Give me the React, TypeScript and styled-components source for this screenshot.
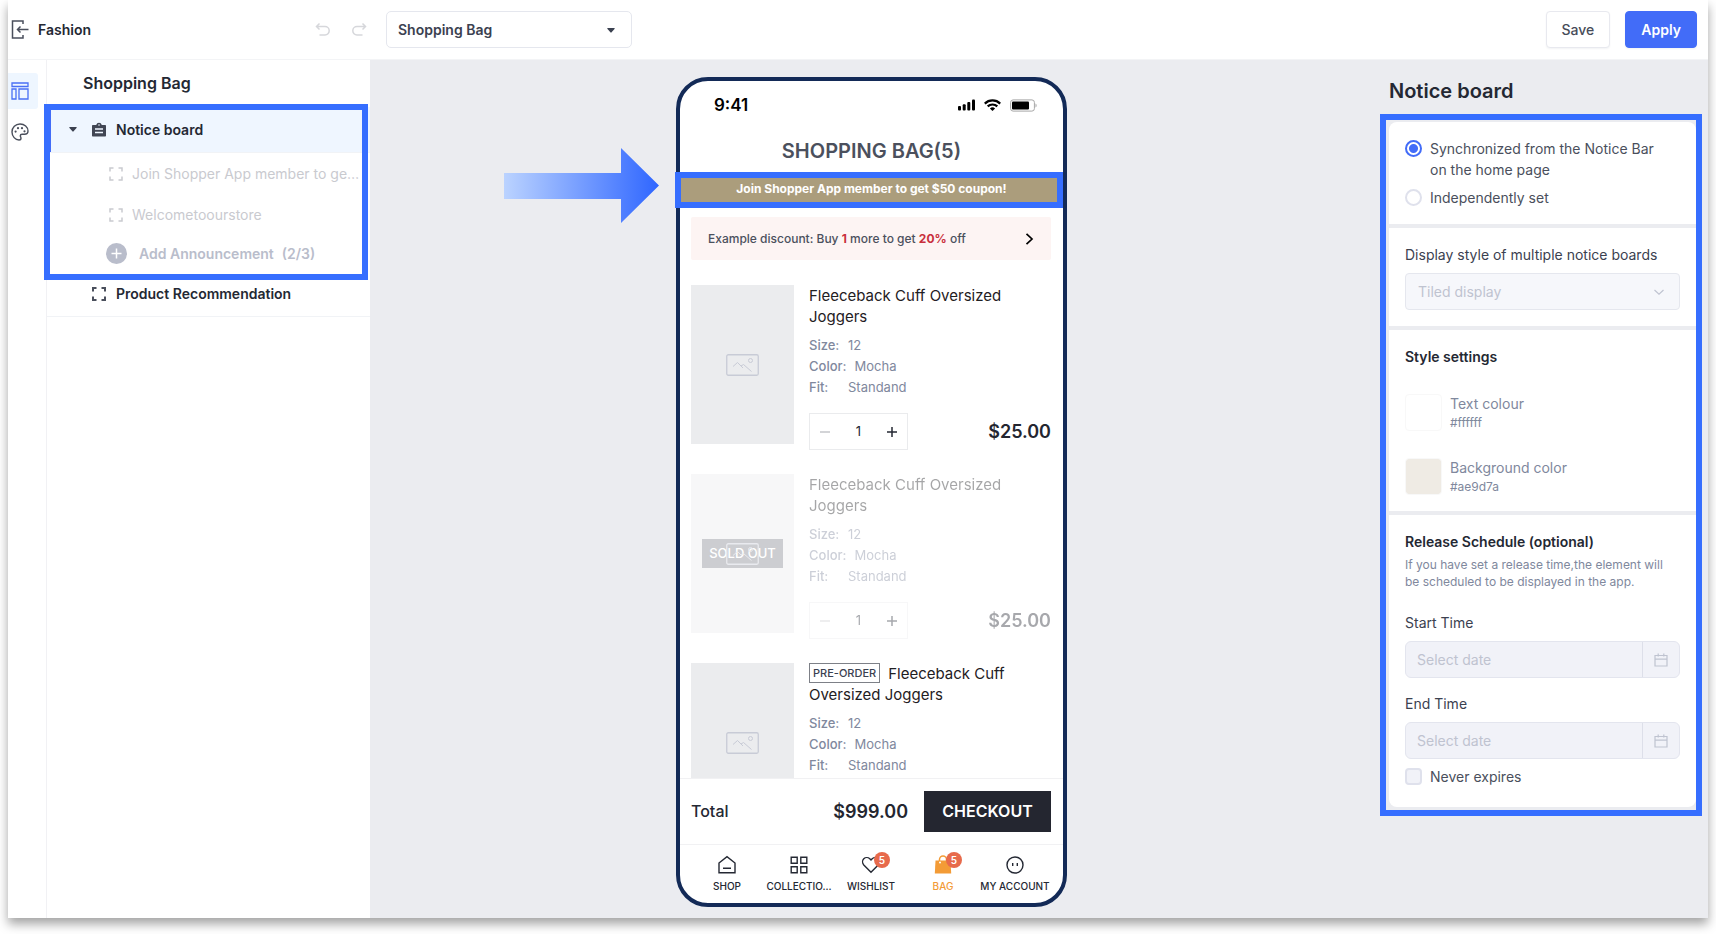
import React from "react";
import styled, { createGlobalStyle, css } from "styled-components";

const GlobalStyle = createGlobalStyle`
  * { box-sizing: border-box; }
  body {
    margin: 0;
    background: #fff;
    color: #242833;
    font: 14px/21px Inter, "Liberation Sans", sans-serif;
  }
  button, input, select { font: inherit; color: inherit; margin: 0; }
  button { padding: 0; border: 0; background: none; }
  h1, h2, h3, p, dl, dd, ul { margin: 0; padding: 0; }
  svg { display: block; flex: none; }
`;

const Page = styled.div`
  padding: 0 8px 16px;
  overflow: hidden;
`;

const AppWindow = styled.div`
  display: flex;
  flex-direction: column;
  height: calc(100vh - 16px);
  min-height: 860px;
  background: #fff;
  box-shadow: 0 6px 10px rgba(0, 0, 0, 0.36);
`;

const Highlight = styled.div<{ $inset: string }>`
  position: absolute;
  inset: ${(p) => p.$inset};
  border: 6px solid #366eff;
  pointer-events: none;
`;

/* Top bar */

const TopBar = styled.header`
  display: flex;
  align-items: center;
  flex: none;
  height: 60px;
  padding: 0 11px 0 3px;
  border-bottom: 1px solid #f3f4f6;
`;

const BackButton = styled.button`
  display: flex;
  align-items: center;
  gap: 9px;
  width: 304px;
  font-weight: 600;
  font-size: 14px;
`;

const History = styled.div`
  display: flex;
  gap: 20px;
  margin-right: 19px;
  color: #d6d7db;
`;

const IconButton = styled.button`
  display: flex;
  color: inherit;
`;

const PagePicker = styled.div`
  position: relative;
  flex: 0 0 246px;
  margin-right: auto;

  select {
    display: block;
    width: 100%;
    height: 37px;
    padding: 0 11px;
    border: 1px solid #e5e7ee;
    border-radius: 5px;
    background: #fff;
    color: #3b4150;
    font-weight: 600;
    appearance: none;
  }
  svg { position: absolute; right: 17px; top: 17px; }
`;

const BarButton = styled.button<{ $primary?: boolean }>`
  height: 37px;
  padding: 0 15px;
  margin-left: 15px;
  border: 1px solid ${(p) => (p.$primary ? "#426cf8" : "#e8e9ef")};
  border-radius: 4px;
  background: ${(p) => (p.$primary ? "#426cf8" : "#fff")};
  color: ${(p) => (p.$primary ? "#fff" : "#474c59")};
  font-weight: ${(p) => (p.$primary ? 600 : 500)};
  box-shadow: 0 1px 2px rgba(40, 50, 80, 0.06);
`;

/* Left side */

const Body = styled.div`
  display: flex;
  flex: 1;
  min-height: 0;
`;

const Rail = styled.nav`
  flex: 0 0 39px;
  display: flex;
  flex-direction: column;
  gap: 5px;
  padding-top: 13px;
  border-right: 1px solid #f1f1f4;
`;

const RailButton = styled.button<{ $active?: boolean }>`
  display: flex;
  align-items: center;
  width: 30px;
  height: 36px;
  padding-left: 3px;
  border-radius: 0 3px 3px 0;
  background: ${(p) => (p.$active ? "#eef6ff" : "transparent")};
  color: ${(p) => (p.$active ? "#4a70f5" : "#4a4f5c")};
`;

const Sidebar = styled.aside`
  flex: 0 0 323px;
  min-width: 0;
`;

const SidebarTitle = styled.h1`
  padding-left: 36px;
  font-size: 16px;
  font-weight: 600;
  line-height: 47px;
`;

const Group = styled.div`
  position: relative;
`;

const BlockRow = styled.button<{ $active?: boolean }>`
  display: flex;
  align-items: center;
  width: 100%;
  height: 46px;
  padding-left: 22px;
  border-bottom: 1px solid #f1f3f6;
  background: ${(p) => (p.$active ? "#eff6ff" : "#fff")};
  ${(p) => p.$active && css`box-shadow: inset 4px 0 #426cf8;`}
  font-weight: 600;
  text-align: left;

  > svg { color: #4a4f5c; }
`;

const CaretSlot = styled.span`
  display: flex;
  width: 23px;
`;

const BlockLabel = styled.span`
  margin-left: 10px;
`;

const NoticeRow = styled.div`
  display: flex;
  align-items: center;
  gap: 9px;
  height: 41px;
  padding: 0 8px 0 62px;
  color: #c9cacf;

  span {
    overflow: hidden;
    text-overflow: ellipsis;
    white-space: nowrap;
  }
`;

const AddRow = styled.button`
  display: flex;
  align-items: center;
  gap: 12px;
  height: 36px;
  padding-left: 59px;
  color: #b9bdcb;
  font-weight: 600;
`;

const AddCount = styled.span`
  margin-left: -4px;
`;

/* Phone preview */

const Canvas = styled.main`
  flex: 1;
  display: flex;
  justify-content: center;
  padding: 17px 0 11px;
  background: #ebecf0;
`;

const PhoneStage = styled.div`
  position: relative;
  display: flex;
`;

const Pointer = styled.svg`
  position: absolute;
  right: calc(100% + 17px);
  top: 71px;
`;

const Phone = styled.section`
  display: flex;
  flex-direction: column;
  width: 391px;
  border: 4px solid #132a57;
  border-radius: 32px;
  background: #fff;
`;

const StatusBar = styled.div`
  display: flex;
  align-items: center;
  gap: 9px;
  height: 48px;
  padding: 0 26px 0 34px;
  color: #000;
`;

const Clock = styled.span`
  margin-right: auto;
  font-size: 17px;
  font-weight: 600;
`;

const BagTitle = styled.h2`
  color: #4b505d;
  font-size: 20px;
  font-weight: 600;
  line-height: 44px;
  text-align: center;
`;

const NoticeStrip = styled.div`
  position: relative;
  background: #ab9d7c;
  color: #fff;
  font-size: 12px;
  font-weight: 700;
  line-height: 32px;
  text-align: center;
`;

const BagBody = styled.div`
  flex: 1;
  min-height: 0;
  padding: 12px 12px 0 11px;
  overflow: hidden;
`;

const Discount = styled.button`
  display: flex;
  align-items: center;
  justify-content: space-between;
  width: 100%;
  height: 43px;
  margin-bottom: 25px;
  padding: 0 17px;
  border-radius: 2px;
  background: #fdf4f3;
  color: #4b505d;
  font-size: 12px;
  font-weight: 500;

  b { color: #c9303c; font-weight: 700; }
`;

const Product = styled.article<{ $faded?: boolean }>`
  display: flex;
  gap: 15px;
  margin-bottom: 24px;
  opacity: ${(p) => (p.$faded ? 0.4 : 1)};
`;

const Thumb = styled.div`
  position: relative;
  display: flex;
  align-items: center;
  justify-content: center;
  flex: 0 0 103px;
  height: 159px;
  background: #ebecee;
  color: #c8cbd6;
`;

const SoldOut = styled.span`
  position: absolute;
  width: 81px;
  background: #80838c;
  color: #fff;
  font-size: 13px;
  font-weight: 500;
  line-height: 29px;
  text-align: center;
`;

const ThumbIcon = styled.div`
  position: relative;
`;

const Info = styled.div`
  flex: 1;
`;

const ProductName = styled.h3`
  height: 42px;
  margin-bottom: 8px;
  padding-right: 30px;
  color: #1f2023;
  font-size: 15px;
  font-weight: 400;
`;

const Tag = styled.span`
  display: inline-block;
  margin-right: 8px;
  padding: 0 3px;
  border: 1px solid #7d8087;
  color: #3b4150;
  font-size: 11px;
  font-weight: 500;
  line-height: 18px;
  vertical-align: top;
`;

const Attribute = styled.div`
  display: flex;
  gap: 8px;
  color: #80889d;
  font-size: 13px;

  dt { min-width: 31px; font-weight: 500; }
`;

const BuyLine = styled.div`
  display: flex;
  align-items: center;
  justify-content: space-between;
  margin-top: 15px;
`;

const Stepper = styled.div`
  display: flex;
  width: 99px;
  height: 37px;
  border: 1px solid #eaebed;

  button {
    display: flex;
    flex: 1;
    align-items: center;
    justify-content: center;
    color: #242833;
  }
  button:disabled { color: #c4c6ca; }
  input {
    width: 36px;
    padding: 0;
    border: 0;
    background: none;
    font-size: 13px;
    text-align: center;
  }
`;

const Amount = styled.strong`
  color: #242630;
  font-size: 18px;
  font-weight: 600;
`;

const TotalBar = styled.div`
  display: flex;
  align-items: center;
  flex: none;
  height: 66px;
  padding: 0 12px 0 11px;
  border-top: 1px solid #f1f1f3;
  font-size: 16px;

  ${Amount} { margin-left: auto; }
`;

const TotalLabel = styled.span`
  font-weight: 500;
`;

const Checkout = styled.button`
  width: 127px;
  height: 41px;
  margin-left: 16px;
  background: #242630;
  color: #fff;
  font-size: 16px;
  font-weight: 600;
`;

const TabBar = styled.nav`
  display: flex;
  flex: none;
  height: 59px;
  padding: 10px 12px 0 11px;
  border-top: 1px solid #f1f1f3;
`;

const Tab = styled.a<{ $active?: boolean }>`
  display: flex;
  flex: 1 0 0;
  min-width: 0;
  flex-direction: column;
  align-items: center;
  gap: 3px;
  color: ${(p) => (p.$active ? "#f39b36" : "#242833")};
  font-size: 10px;
  font-weight: 500;
  line-height: 16px;
  text-decoration: none;
  white-space: nowrap;
`;

const TabIcon = styled.span`
  position: relative;
`;

const Badge = styled.span`
  position: absolute;
  left: 13px;
  top: -3px;
  width: 16px;
  border-radius: 8px;
  background: #e76a4b;
  color: #fff;
  font-size: 10px;
  font-weight: 600;
  line-height: 16px;
  text-align: center;
`;

/* Settings panel */

const Panel = styled.aside`
  flex: 0 0 335px;
  min-width: 0;
  padding: 17px 12px 0 16px;
  background: #ebecf0;
`;

const PanelTitle = styled.h2`
  margin-bottom: 17px;
  font-size: 20px;
  font-weight: 600;
  line-height: 28px;
`;

const Card = styled.form`
  position: relative;
`;

const Section = styled.section`
  padding: 16px;
  margin-bottom: 4px;
  background: #fff;

  &:first-child { border-radius: 8px 8px 0 0; }
  &:last-of-type { margin-bottom: 0; padding-bottom: 20px; border-radius: 0 0 8px 8px; }
`;

const Choice = styled.label`
  display: flex;
  gap: 8px;
  padding-right: 16px;
  color: #4a4f5c;

  & + & { margin-top: 7px; }

  input {
    flex: none;
    width: 17px;
    height: 17px;
    margin: 2px 0;
    border: 2px solid #dfe1ec;
    background: #fff;
    appearance: none;
  }
  input[type="radio"] { border-radius: 50%; }
  input[type="radio"]:checked {
    border-color: #426cf8;
    background: radial-gradient(circle, #426cf8 4px, #fff 5px);
  }
  input[type="checkbox"] { border-radius: 4px; background: #f1f2f8; }
`;

const FieldLabel = styled.label`
  display: block;
  margin-bottom: 8px;
  color: #3b4150;
`;

const StyleSelect = styled.div`
  position: relative;

  select {
    display: block;
    width: 100%;
    height: 37px;
    padding: 0 12px;
    border: 1px solid #e5e7ee;
    border-radius: 4px;
    background: #f6f7fb;
    color: #bfc3d0;
    opacity: 1;
    appearance: none;
  }
  svg { position: absolute; right: 16px; top: 14px; color: #bfc3d0; }
`;

const SectionTitle = styled.h3`
  font-size: 14px;
  font-weight: 600;
`;

const ColorRow = styled.label`
  display: flex;
  align-items: center;
  gap: 8px;
  margin-top: 26px;
  color: #80889d;

  input {
    width: 37px;
    height: 37px;
    padding: 0;
    border: 1px solid #f8f8f8;
    border-radius: 4px;
    background: none;
    appearance: none;
  }
  input::-webkit-color-swatch-wrapper { padding: 0; }
  input::-webkit-color-swatch { border: 0; border-radius: 3px; opacity: 0.2; }
`;

const ColorText = styled.span`
  display: flex;
  flex-direction: column;

  small { font-size: 12px; line-height: 17px; }
`;

const Hint = styled.p`
  margin: 4px 0 22px;
  padding-right: 8px;
  color: #80889d;
  font-size: 12px;
  line-height: 17px;
`;

const DateField = styled.div`
  display: flex;
  height: 37px;
  margin-bottom: 15px;
  border: 1px solid #e3e5ee;
  border-radius: 6px;
  background: #f1f2f8;
  color: #bfc3d0;

  input {
    flex: 1;
    width: 0;
    min-width: 0;
    padding: 0 11px;
    border: 0;
    background: none;
  }
  input::placeholder { color: #bfc3d0; }
  button {
    display: flex;
    align-items: center;
    justify-content: center;
    width: 37px;
    border-left: 1px solid #dddfe9;
    color: inherit;
  }
  & + ${Choice} { margin-top: -8px; }
`;

/* Icons */

const Line = ({ size = 18, w = 1.5, children }: { size?: number; w?: number; children: React.ReactNode }) => (
  <svg width={size} height={size} viewBox={`0 0 ${size} ${size}`} fill="none" stroke="currentColor" strokeWidth={w} aria-hidden="true">
    {children}
  </svg>
);

const Caret = () => (
  <svg width="8" height="5" viewBox="0 0 8 5" fill="#3b4150" aria-hidden="true">
    <path d="M1 0h6c.7 0 .9.600.5 1.100L4.600 4.300a.8.8 0 0 1-1.200 0L.5 1.100C.1.600.3 0 1 0z" />
  </svg>
);

const FrameIcon = ({ w = 2 }: { w?: number }) => (
  <Line size={14} w={w}>
    <path d="M1 4.500V1h3.500M9.500 1H13v3.500M13 9.500V13H9.500M4.500 13H1V9.500" />
  </Line>
);

const ImageIcon = () => (
  <svg width="33" height="22" viewBox="0 0 33 22" fill="none" stroke="currentColor" aria-hidden="true">
    <rect x=".75" y=".75" width="31.500" height="20.500" rx="1.500" strokeWidth="1.300" />
    <path d="M7 12.500l4.500-4 5.500 5.500M15 12l2.500-1.500 8 7" />
    <circle cx="24.500" cy="6.500" r="2" />
  </svg>
);

const CalendarIcon = () => (
  <Line size={14} w={1.2}>
    <path d="M1 2.500h12v10.500H1zM1 6.200h12M4.200.5v3M9.800.5v3" />
  </Line>
);

type ProductProps = { tag?: string; soldOut?: boolean; buyable?: boolean };

const ProductItem = ({ tag, soldOut, buyable = true }: ProductProps) => (
  <Product $faded={soldOut}>
    <Thumb>
      {soldOut && <SoldOut>SOLD OUT</SoldOut>}
      <ThumbIcon><ImageIcon /></ThumbIcon>
    </Thumb>
    <Info>
      <ProductName>
        {tag && <Tag>{tag}</Tag>}
        Fleeceback Cuff Oversized Joggers
      </ProductName>
      <dl>
        <Attribute><dt>Size:</dt><dd>12</dd></Attribute>
        <Attribute><dt>Color:</dt><dd>Mocha</dd></Attribute>
        <Attribute><dt>Fit:</dt><dd>Standand</dd></Attribute>
      </dl>
      {buyable && (
        <BuyLine>
          <Stepper>
            <button type="button" disabled aria-label="Decrease">
              <Line size={10}><path d="M0 5h10" /></Line>
            </button>
            <input aria-label="Quantity" defaultValue="1" />
            <button type="button" aria-label="Increase">
              <Line size={10}><path d="M0 5h10M5 0v10" /></Line>
            </button>
          </Stepper>
          <Amount>$25.00</Amount>
        </BuyLine>
      )}
    </Info>
  </Product>
);

export default function App() {
  return (
    <Page>
      <GlobalStyle />
      <AppWindow>
        <TopBar>
          <BackButton type="button">
            <svg width="18" height="19" viewBox="0 0 18 19" fill="none" stroke="#4a4f5c" strokeWidth="1.500" aria-hidden="true">
              <path d="M12 4V1H1.500v17H12v-3M17.500 9.500H6.500M9.500 6.500l-3 3 3 3" />
            </svg>
            Fashion
          </BackButton>
          <History>
            <IconButton type="button" aria-label="Undo">
              <Line size={16} w={1.5}><path d="M4.500 1.500l-3 3 3 3M1.500 4.500H10a4.200 4.200 0 0 1 0 8.400H4.500" /></Line>
            </IconButton>
            <IconButton type="button" aria-label="Redo">
              <Line size={16} w={1.5}><path d="M11.500 1.500l3 3-3 3M14.500 4.500H6a4.200 4.200 0 0 0 0 8.400h5.500" /></Line>
            </IconButton>
          </History>
          <PagePicker>
            <select aria-label="Page"><option>Shopping Bag</option></select>
            <Caret />
          </PagePicker>
          <BarButton type="button">Save</BarButton>
          <BarButton type="button" $primary>Apply</BarButton>
        </TopBar>

        <Body>
          <Rail>
            <RailButton type="button" $active aria-label="Layout">
              <Line size={18} w={1.3}><path d="M1 1h16v3.500H1zM1 7h4v10H1zM8 7h9v10H8z" /></Line>
            </RailButton>
            <RailButton type="button" aria-label="Theme">
              <Line size={18} w={1.4}>
                <path d="M9 1C4.500 1 1 4.500 1 9c0 4.400 3.300 8 7 8 1.200 0 2-.7 2-1.800 0-1-.7-1.500-.7-2.400 0-1 .8-1.600 1.800-1.600h2.400c2 0 3.500-1.200 3.500-3.200C17 4 13.400 1 9 1z" />
                <g fill="currentColor" stroke="none">
                  <circle cx="4.600" cy="8.600" r="1.100" /><circle cx="7" cy="5.200" r="1.100" />
                  <circle cx="11" cy="5.200" r="1.100" /><circle cx="13.500" cy="8.300" r="1.100" />
                </g>
              </Line>
            </RailButton>
          </Rail>

          <Sidebar>
            <SidebarTitle>Shopping Bag</SidebarTitle>
            <Group>
              <BlockRow type="button" $active>
                <CaretSlot><Caret /></CaretSlot>
                <svg width="14" height="15" viewBox="0 0 14 15" aria-hidden="true">
                  <path d="M1 3h3.200a2.900 2.900 0 0 1 5.600 0H13c.6 0 1 .4 1 1v9.500c0 .6-.4 1-1 1H1c-.6 0-1-.4-1-1V4c0-.6.4-1 1-1z" fill="#414654" />
                  <path d="M3 7h8M3 10.500h8" stroke="#eff6ff" strokeWidth="1.400" />
                  <circle cx="7" cy="3" r=".8" fill="#eff6ff" />
                </svg>
                <BlockLabel>Notice board</BlockLabel>
              </BlockRow>
              <NoticeRow><FrameIcon w={1.5} /><span>Join Shopper App member to get $50 coupon!</span></NoticeRow>
              <NoticeRow><FrameIcon w={1.5} /><span>Welcometoourstore</span></NoticeRow>
              <AddRow type="button">
                <svg width="21" height="21" viewBox="0 0 21 21" aria-hidden="true">
                  <circle cx="10.500" cy="10.500" r="10.500" fill="#b9bdcb" />
                  <path d="M5.500 10.500h10M10.500 5.500v10" stroke="#fff" strokeWidth="1.500" />
                </svg>
                <span>Add Announcement</span>
                <AddCount>(2/3)</AddCount>
              </AddRow>
              <Highlight $inset="-3px 2px -9px -3px" />
            </Group>
            <BlockRow type="button">
              <CaretSlot />
              <FrameIcon />
              <BlockLabel>Product Recommendation</BlockLabel>
            </BlockRow>
          </Sidebar>

          <Canvas>
            <PhoneStage>
              <Pointer width="155" height="75" viewBox="0 0 155 75" aria-hidden="true">
                <defs>
                  <linearGradient id="pointerFill" x1="0" x2="1" y1="0" y2="0">
                    <stop offset="0" stopColor="#bbd3ff" />
                    <stop offset="1" stopColor="#2f66ff" />
                  </linearGradient>
                </defs>
                <path d="M0 25h117V0l38 37.500L117 75V51H0z" fill="url(#pointerFill)" />
              </Pointer>
              <Phone>
                <StatusBar>
                  <Clock>9:41</Clock>
                  <svg width="17" height="12" viewBox="0 0 17 12" aria-hidden="true">
                    <rect x="0" y="7" width="3" height="4.500" rx="1" /><rect x="4.700" y="5.300" width="3" height="6.200" rx="1" />
                    <rect x="9.300" y="3" width="3" height="8.500" rx="1" /><rect x="14" y=".5" width="3" height="11" rx="1" />
                  </svg>
                  <svg width="17" height="12" viewBox="0 0 17 12" fill="none" stroke="#000" strokeWidth="2.200" aria-hidden="true">
                    <path d="M.8 4.600a11 11 0 0 1 15.400 0M3.700 7.400a7 7 0 0 1 9.600 0" />
                    <path d="M8.500 12L5.900 9.400a3.800 3.800 0 0 1 5.200 0z" fill="#000" stroke="none" />
                  </svg>
                  <svg width="27" height="13" viewBox="0 0 27 13" aria-hidden="true">
                    <rect x=".6" y=".9" width="23.800" height="11.200" rx="2.500" fill="none" stroke="#a6a6a6" />
                    <rect x="2" y="2.500" width="17" height="8" rx="1" /><path d="M25.500 4.500c1.500.6 1.500 3.400 0 4z" fill="#a6a6a6" />
                  </svg>
                </StatusBar>
                <BagTitle>SHOPPING BAG(5)</BagTitle>
                <NoticeStrip>
                  Join Shopper App member to get $50 coupon!
                  <Highlight $inset="-1px 0 -3px -5px" />
                </NoticeStrip>
                <BagBody>
                  <Discount type="button">
                    <span>Example discount: Buy <b>1</b> more to get <b>20%</b> off</span>
                    <svg width="9" height="12" viewBox="0 0 9 12" fill="none" stroke="#000" strokeWidth="1.700" aria-hidden="true">
                      <path d="M1.500.8L7 6l-5.500 5.200" />
                    </svg>
                  </Discount>
                  <ProductItem />
                  <ProductItem soldOut />
                  <ProductItem tag="PRE-ORDER" buyable={false} />
                </BagBody>
                <TotalBar>
                  <TotalLabel>Total</TotalLabel>
                  <Amount>$999.00</Amount>
                  <Checkout type="button">CHECKOUT</Checkout>
                </TotalBar>
                <TabBar>
                  <Tab href="#shop">
                    <Line size={20} w={1.4}><path d="M2 8l8-6.300L18 8v9.800H2zM6 13.200h8" /></Line>
                    SHOP
                  </Tab>
                  <Tab href="#collections">
                    <Line size={20} w={1.4}><path d="M2.200 2.200h6v6h-6zM11.800 2.200h6v6h-6zM2.200 11.800h6v6h-6zM11.800 11.800h6v6h-6z" /></Line>
                    COLLECTIO...
                  </Tab>
                  <Tab href="#wishlist">
                    <TabIcon>
                      <Line size={20} w={1.4}>
                        <path d="M10 17.300L2.800 10C1.200 8.200 1.200 5.400 2.800 3.800s4.300-1.600 6 0L10 5l1.200-1.200c1.700-1.600 4.400-1.600 6 0s1.600 4.400 0 6.200z" />
                      </Line>
                      <Badge>5</Badge>
                    </TabIcon>
                    WISHLIST
                  </Tab>
                  <Tab href="#bag" $active>
                    <TabIcon>
                      <svg width="20" height="20" viewBox="0 0 20 20" aria-hidden="true">
                        <path d="M2.500 5.500h15l.7 13H1.800z" fill="#f39b36" />
                        <path d="M6.500 6V4.500a3.500 3.500 0 0 1 7 0V6" fill="none" stroke="#f39b36" strokeWidth="1.500" />
                        <circle cx="7" cy="7.500" r="1" fill="#fff" />
                      </svg>
                      <Badge>5</Badge>
                    </TabIcon>
                    BAG
                  </Tab>
                  <Tab href="#account">
                    <Line size={20} w={1.4}><circle cx="10" cy="10" r="8" /><path d="M7.700 8v3M12.300 8v3" /></Line>
                    MY ACCOUNT
                  </Tab>
                </TabBar>
              </Phone>
            </PhoneStage>
          </Canvas>

          <Panel>
            <PanelTitle>Notice board</PanelTitle>
            <Card>
              <Section>
                <Choice>
                  <input type="radio" name="source" defaultChecked />
                  <span>Synchronized from the Notice Bar on the home page</span>
                </Choice>
                <Choice>
                  <input type="radio" name="source" />
                  <span>Independently set</span>
                </Choice>
              </Section>
              <Section>
                <FieldLabel htmlFor="display">Display style of multiple notice boards</FieldLabel>
                <StyleSelect>
                  <select id="display" disabled><option>Tiled display</option></select>
                  <Line size={10} w={1.2}><path d="M.5 3L5 7.200 9.500 3" /></Line>
                </StyleSelect>
              </Section>
              <Section>
                <SectionTitle>Style settings</SectionTitle>
                <ColorRow>
                  <input type="color" defaultValue="#ffffff" disabled />
                  <ColorText>Text colour<small>#ffffff</small></ColorText>
                </ColorRow>
                <ColorRow>
                  <input type="color" defaultValue="#ae9d7a" disabled />
                  <ColorText>Background color<small>#ae9d7a</small></ColorText>
                </ColorRow>
              </Section>
              <Section>
                <SectionTitle>Release Schedule (optional)</SectionTitle>
                <Hint>If you have set a release time,the element will be scheduled to be displayed in the app.</Hint>
                <FieldLabel htmlFor="start">Start Time</FieldLabel>
                <DateField>
                  <input id="start" placeholder="Select date" disabled />
                  <button type="button" disabled aria-label="Pick start date"><CalendarIcon /></button>
                </DateField>
                <FieldLabel htmlFor="end">End Time</FieldLabel>
                <DateField>
                  <input id="end" placeholder="Select date" disabled />
                  <button type="button" disabled aria-label="Pick end date"><CalendarIcon /></button>
                </DateField>
                <Choice>
                  <input type="checkbox" disabled />
                  <span>Never expires</span>
                </Choice>
              </Section>
              <Highlight $inset="-8px -6px -9px -9px" />
            </Card>
          </Panel>
        </Body>
      </AppWindow>
    </Page>
  );
}
